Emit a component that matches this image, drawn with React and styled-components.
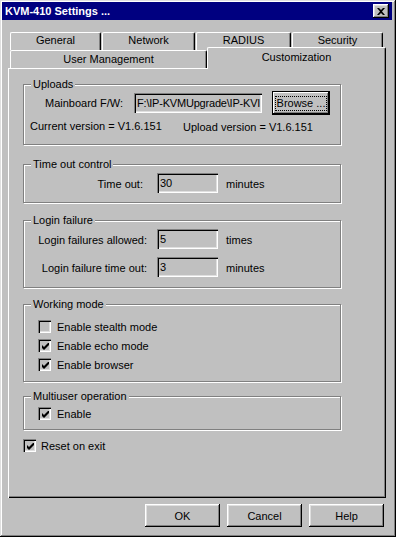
import React from 'react';
import styled, { createGlobalStyle } from 'styled-components';

const GlobalStyle = createGlobalStyle`
  html, body {
    margin: 0;
    padding: 0;
    background: #c0c0c0;
  }
  body {
    font-family: "Liberation Sans", Arial, sans-serif;
    font-size: 11px;
    color: #000;
  }
`;

const Window = styled.div`
  width: 396px;
  height: 537px;
  box-sizing: border-box;
  padding: 2px 4px 2px 2px;
  background: #c0c0c0;
  box-shadow: inset -1px -1px #000, inset 1px 1px #dfdfdf,
    inset -2px -2px #808080, inset 2px 2px #fff;
  display: flex;
  flex-direction: column;
`;

const TitleBar = styled.div`
  height: 18px;
  background: #000080;
  color: #fff;
  font-weight: bold;
  font-size: 11px;
  display: flex;
  align-items: center;
  justify-content: space-between;
  padding-left: 3px;
  flex-shrink: 0;
`;

const CloseBox = styled.div`
  width: 16px;
  height: 14px;
  margin-right: 3px;
  box-sizing: border-box;
  background: #c0c0c0;
  box-shadow: inset -1px -1px #000, inset 1px 1px #fff,
    inset -2px -2px #808080, inset 2px 2px #dfdfdf;
  display: flex;
  align-items: center;
  justify-content: center;
`;

const Body = styled.div`
  flex: 1;
  display: flex;
  flex-direction: column;
  padding: 12px 6px 8px 6px;
`;

const TabRow = styled.div`
  display: flex;
  height: 18px;
  gap: ${p => p.$gap || 0}px;
  padding-left: 2px;
  flex-shrink: 0;
`;

const Tab = styled.div`
  width: ${p => p.$w}px;
  height: ${p => (p.$active ? 22 : 18)}px;
  margin-top: ${p => (p.$active ? -3 : 0)}px;
  box-sizing: border-box;
  position: relative;
  z-index: ${p => (p.$active ? 2 : 1)};
  background: #c0c0c0;
  border-top: 1px solid #fff;
  border-left: 1px solid #fff;
  border-right: 1px solid #000;
  border-top-left-radius: 2px;
  border-top-right-radius: 2px;
  box-shadow: inset -1px 0 #808080;
  display: flex;
  align-items: center;
  justify-content: center;
  line-height: 13px;
  padding-bottom: ${p => p.$lift || 0}px;
`;

const Panel = styled.div`
  flex: 1;
  display: flex;
  flex-direction: column;
  padding: 16px 0 0 15px;
  box-shadow: inset 1px 1px #fff, inset -1px -1px #000, inset -2px -2px #808080;
`;

const Group = styled.div`
  position: relative;
  width: 318px;
  box-sizing: border-box;
  border: 1px solid #808080;
  box-shadow: inset 1px 1px #fff, 1px 1px #fff;
  padding: ${p => p.$pad};
  margin-top: ${p => p.$top || 0}px;
  display: flex;
  flex-direction: column;
`;

const Caption = styled.span`
  position: absolute;
  top: -7px;
  left: 7px;
  padding: 0 2px;
  line-height: 13px;
  background: #c0c0c0;
`;

const Row = styled.div`
  display: flex;
  align-items: ${p => p.$align || 'center'};
  height: ${p => p.$h}px;
  padding-left: ${p => p.$indent || 0}px;
  margin-top: ${p => p.$top || 0}px;
`;

const Label = styled.span`
  width: ${p => p.$w}px;
  text-align: ${p => p.$right ? 'right' : 'left'};
  margin-right: ${p => p.$gap || 0}px;
  line-height: 13px;
  margin-bottom: ${p => p.$drop || 0}px;
  white-space: nowrap;
  flex-shrink: 0;
`;

const Field = styled.div`
  width: ${p => p.$w}px;
  height: 20px;
  box-sizing: border-box;
  padding: 3px 2px 0 3px;
  line-height: 14px;
  letter-spacing: -0.2px;
  overflow: hidden;
  white-space: nowrap;
  background: #c0c0c0;
  box-shadow: inset 1px 1px #808080, inset 2px 2px #000,
    inset -1px -1px #fff, inset -2px -2px #dfdfdf;
  flex-shrink: 0;
`;

const Unit = styled.span`
  margin-left: 8px;
  line-height: 13px;
  margin-bottom: 2px;
`;

const Button = styled.div`
  width: ${p => p.$w}px;
  height: ${p => p.$h || 23}px;
  box-sizing: border-box;
  background: #c0c0c0;
  display: flex;
  align-items: center;
  justify-content: center;
  box-shadow: ${p => p.$default
    ? 'inset 0 0 0 1px #000, inset -2px -2px #000, inset 2px 2px #fff, inset -3px -3px #808080'
    : 'inset -1px -1px #000, inset 1px 1px #fff, inset -2px -2px #808080, inset 2px 2px #dfdfdf'};
  flex-shrink: 0;
`;

const Focus = styled.span`
  outline: 1px dotted #000;
  padding: 0 1px;
  line-height: 13px;
`;

const Check = styled.div`
  width: 13px;
  height: 13px;
  box-sizing: border-box;
  background: #c0c0c0;
  box-shadow: inset 1px 1px #808080, inset 2px 2px #000,
    inset -1px -1px #fff, inset -2px -2px #dfdfdf;
  display: flex;
  align-items: center;
  justify-content: center;
  margin-left: ${p => p.$left || 0}px;
  margin-right: ${p => p.$gap || 6}px;
  flex-shrink: 0;
`;

const ButtonRow = styled.div`
  display: flex;
  justify-content: flex-end;
  gap: 7px;
  margin-top: 6px;
  margin-right: 2px;
  flex-shrink: 0;
`;

const Standalone = styled.div`
  margin-top: ${p => p.$top}px;
`;

const Tick = () => (
  <svg width="7" height="7" viewBox="0 0 7 7" style={{ marginLeft: 1, marginTop: 1 }}>
    <path d="M0 2 L2 4 L6 0 H7 V2 L2 7 L0 5 Z" fill="#000" />
  </svg>
);

const CheckItem = ({ checked, left, gap, label, h = 19 }) => (
  <Row $h={h}>
    <Check $left={left} $gap={gap}>{checked && <Tick />}</Check>
    <span>{label}</span>
  </Row>
);

const CloseGlyph = () => (
  <svg width="8" height="7" viewBox="0 0 8 7">
    <path d="M0 0 H2 L4 2 L6 0 H8 L5 3.5 L8 7 H6 L4 5 L2 7 H0 L3 3.5 Z" fill="#000" />
  </svg>
);

const backTabs = [
  { name: 'General', w: 91 },
  { name: 'Network', w: 93 },
  { name: 'RADIUS', w: 95 },
  { name: 'Security', w: 91 },
];

const App = () => {
  return (
    <Window>
      <GlobalStyle />
      <TitleBar>
        <span>KVM-410 Settings ...</span>
        <CloseBox><CloseGlyph /></CloseBox>
      </TitleBar>
      <Body>
        <TabRow $gap={1}>
          {backTabs.map(t => <Tab key={t.name} $w={t.w} $lift={2}>{t.name}</Tab>)}
        </TabRow>
        <TabRow>
          <Tab $w={197}>User Management</Tab>
          <Tab $w={179} $active $lift={3}>Customization</Tab>
        </TabRow>
        <Panel>
          <Group $pad="6px 6px 11px 6px">
            <Caption>Uploads</Caption>
            <Row $h={24} $indent={15}>
              <Label $w={89}>Mainboard F/W:</Label>
              <Field $w={128}>F:\IP-KVMUpgrade\IP-KVI</Field>
              <div style={{ width: 10 }} />
              <Button $w={58} $h={24} $default><Focus>Browse ...</Focus></Button>
            </Row>
            <Row $h={13} $top={5}>
              <Label $w={153}>Current version = V1.6.151</Label>
              <span>Upload version = V1.6.151</span>
            </Row>
          </Group>

          <Group $pad="8px 6px 9px 6px" $top={19}>
            <Caption>Time out control</Caption>
            <Row $h={20} $align="flex-end">
              <Label $w={113} $gap={14} $right $drop={2}>Time out:</Label>
              <Field $w={61}>30</Field>
              <Unit>minutes</Unit>
            </Row>
          </Group>

          <Group $pad="8px 6px 10px 6px" $top={17}>
            <Caption>Login failure</Caption>
            <Row $h={20} $align="flex-end">
              <Label $w={117} $gap={10} $right $drop={2}>Login failures allowed:</Label>
              <Field $w={61}>5</Field>
              <Unit>times</Unit>
            </Row>
            <Row $h={20} $top={8} $align="flex-end">
              <Label $w={117} $gap={10} $right $drop={2}>Login failure time out:</Label>
              <Field $w={61}>3</Field>
              <Unit>minutes</Unit>
            </Row>
          </Group>

          <Group $pad="12px 6px 7px 6px" $top={16}>
            <Caption>Working mode</Caption>
            <CheckItem left={8} label="Enable stealth mode" />
            <CheckItem left={8} checked label="Enable echo mode" />
            <CheckItem left={8} checked label="Enable browser" />
          </Group>

          <Group $pad="7px 6px 6px 6px" $top={14}>
            <Caption>Multiuser operation</Caption>
            <CheckItem left={8} checked label="Enable" />
          </Group>

          <Standalone $top={6}>
            <CheckItem checked gap={5} label="Reset on exit" />
          </Standalone>
        </Panel>
        <ButtonRow>
          <Button $w={75}>OK</Button>
          <Button $w={75}>Cancel</Button>
          <Button $w={75}>Help</Button>
        </ButtonRow>
      </Body>
    </Window>
  );
};

export default App;
